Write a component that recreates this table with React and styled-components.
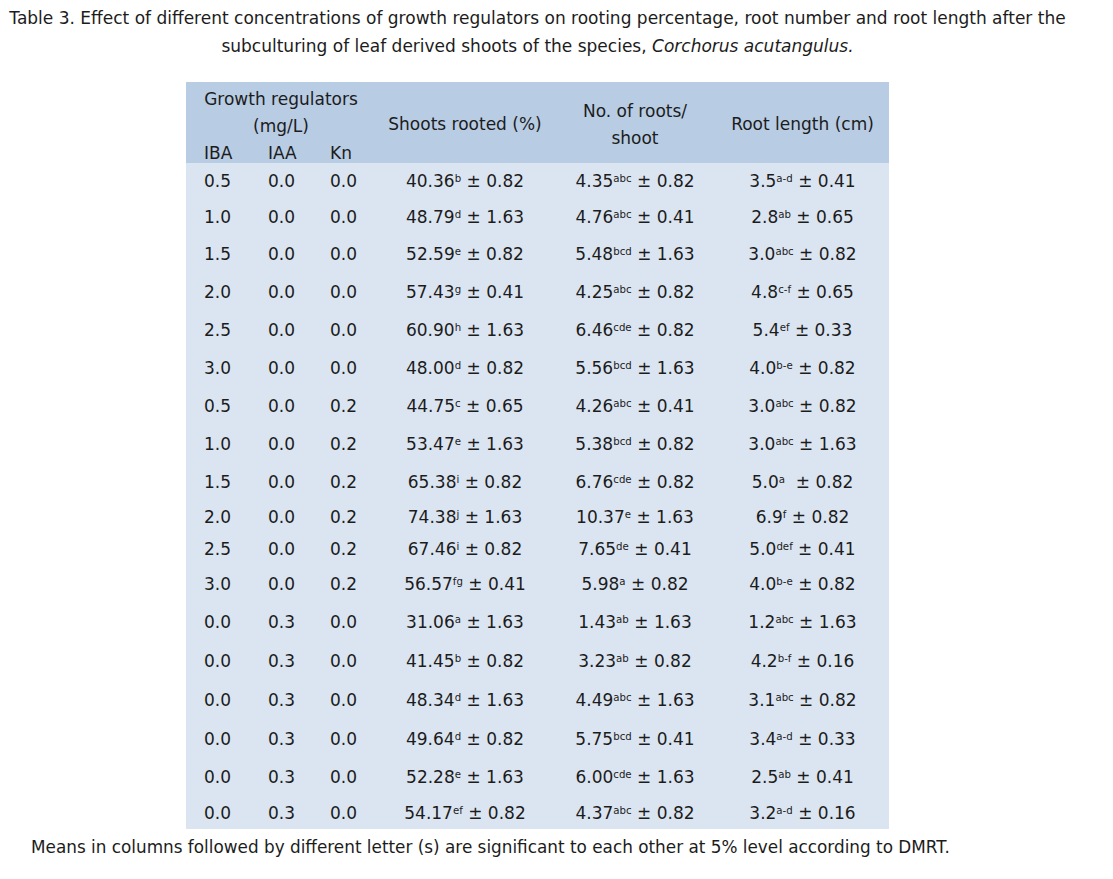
import React from "react";
import styled, { createGlobalStyle } from "styled-components";

const GlobalStyle = createGlobalStyle`
  body {
    margin: 0;
    background: #ffffff;
    font-family: "DejaVu Sans", "Open Sans", sans-serif;
    color: #1c1c1c;
  }
`;

const Page = styled.div`
  width: 1075px;
  display: flex;
  flex-direction: column;
  align-items: center;
  padding-top: 4px;
`;

const Caption = styled.div`
  display: flex;
  flex-direction: column;
  align-items: center;
  font-size: 17px;
  line-height: 28px;
  margin-bottom: 22px;
`;

const CaptionLine = styled.div`
  white-space: nowrap;
  em {
    font-style: italic;
  }
`;

const Table = styled.div`
  width: 703px;
  display: grid;
  grid-template-columns: 65px 62px 63px 178px 162px 173px;
  font-size: 17px;
`;

const Head = styled.div`
  grid-column: 1 / -1;
  display: grid;
  grid-template-columns: subgrid;
  grid-template-rows: 27px 27px 23px;
  padding-top: 4px;
  background: #b8cce4;
`;

const HeadCell = styled.div`
  display: flex;
  align-items: ${(p) => (p.$top ? "flex-start" : "center")};
  justify-content: ${(p) => (p.$left ? "flex-start" : "center")};
  padding-left: ${(p) => p.$pad || 0}px;
  grid-column: ${(p) => p.$col};
  grid-row: ${(p) => p.$row};
  text-align: center;
  line-height: 27px;
  white-space: nowrap;
`;

const Body = styled.div`
  grid-column: 1 / -1;
  display: grid;
  grid-template-columns: subgrid;
  background: #dbe5f1;
`;

const Row = styled.div`
  grid-column: 1 / -1;
  display: grid;
  grid-template-columns: subgrid;
  height: ${(p) => p.$h}px;
  align-items: center;
`;

const Conc = styled.div`
  padding-left: ${(p) => p.$pad}px;
  white-space: nowrap;
`;

const Value = styled.div`
  text-align: center;
  white-space: pre;
`;

const Sup = styled.span`
  font-size: 0.6em;
  vertical-align: 0.45em;
  line-height: 0;
`;

const Note = styled.div`
  align-self: flex-start;
  padding-left: 31px;
  margin-top: 6px;
  font-size: 16.85px;
  line-height: 24px;
  white-space: nowrap;
`;

const rows = [
  [36, "0.5", "0.0", "0.0", ["40.36", "b", "0.82"], ["4.35", "abc", "0.82"], ["3.5", "a-d", "0.41"]],
  [36, "1.0", "0.0", "0.0", ["48.79", "d", "1.63"], ["4.76", "abc", "0.41"], ["2.8", "ab", "0.65"]],
  [38, "1.5", "0.0", "0.0", ["52.59", "e", "0.82"], ["5.48", "bcd", "1.63"], ["3.0", "abc", "0.82"]],
  [38, "2.0", "0.0", "0.0", ["57.43", "g", "0.41"], ["4.25", "abc", "0.82"], ["4.8", "c-f", "0.65"]],
  [38, "2.5", "0.0", "0.0", ["60.90", "h", "1.63"], ["6.46", "cde", "0.82"], ["5.4", "ef", "0.33"]],
  [38, "3.0", "0.0", "0.0", ["48.00", "d", "0.82"], ["5.56", "bcd", "1.63"], ["4.0", "b-e", "0.82"]],
  [38, "0.5", "0.0", "0.2", ["44.75", "c", "0.65"], ["4.26", "abc", "0.41"], ["3.0", "abc", "0.82"]],
  [38, "1.0", "0.0", "0.2", ["53.47", "e", "1.63"], ["5.38", "bcd", "0.82"], ["3.0", "abc", "1.63"]],
  [37, "1.5", "0.0", "0.2", ["65.38", "i", "0.82"], ["6.76", "cde", "0.82"], ["5.0", "a", "0.82", true]],
  [33, "2.0", "0.0", "0.2", ["74.38", "j", "1.63"], ["10.37", "e", "1.63"], ["6.9", "f", "0.82"]],
  [32, "2.5", "0.0", "0.2", ["67.46", "i", "0.82"], ["7.65", "de", "0.41"], ["5.0", "def", "0.41"]],
  [37, "3.0", "0.0", "0.2", ["56.57", "fg", "0.41"], ["5.98", "a", "0.82"], ["4.0", "b-e", "0.82"]],
  [39, "0.0", "0.3", "0.0", ["31.06", "a", "1.63"], ["1.43", "ab", "1.63"], ["1.2", "abc", "1.63"]],
  [39, "0.0", "0.3", "0.0", ["41.45", "b", "0.82"], ["3.23", "ab", "0.82"], ["4.2", "b-f", "0.16"]],
  [39, "0.0", "0.3", "0.0", ["48.34", "d", "1.63"], ["4.49", "abc", "1.63"], ["3.1", "abc", "0.82"]],
  [39, "0.0", "0.3", "0.0", ["49.64", "d", "0.82"], ["5.75", "bcd", "0.41"], ["3.4", "a-d", "0.33"]],
  [38, "0.0", "0.3", "0.0", ["52.28", "e", "1.63"], ["6.00", "cde", "1.63"], ["2.5", "ab", "0.41"]],
  [33, "0.0", "0.3", "0.0", ["54.17", "ef", "0.82"], ["4.37", "abc", "0.82"], ["3.2", "a-d", "0.16"]],
];

function Stat({ v }) {
  return (
    <Value>
      {v[0]}
      <Sup>{v[1]}</Sup>
      {v[3] ? "  ± " : " ± "}
      {v[2]}
    </Value>
  );
}

export default function App() {
  return (
    <Page>
      <GlobalStyle />
      <Caption>
        <CaptionLine>
          Table 3. Effect of different concentrations of growth regulators on rooting percentage, root number and root length after the
        </CaptionLine>
        <CaptionLine>
          subculturing of leaf derived shoots of the species, <em>Corchorus acutangulus.</em>
        </CaptionLine>
      </Caption>

      <Table>
        <Head>
          <HeadCell $col="1 / 4" $row="1">Growth regulators</HeadCell>
          <HeadCell $col="1 / 4" $row="2">(mg/L)</HeadCell>
          <HeadCell $col="1" $row="3" $left $top $pad={18}>IBA</HeadCell>
          <HeadCell $col="2" $row="3" $left $top $pad={17}>IAA</HeadCell>
          <HeadCell $col="3" $row="3" $left $top $pad={17}>Kn</HeadCell>
          <HeadCell $col="4" $row="1 / 4">Shoots rooted (%)</HeadCell>
          <HeadCell $col="5" $row="1 / 4">
            No. of roots/
            <br />
            shoot
          </HeadCell>
          <HeadCell $col="6" $row="1 / 4">Root length (cm)</HeadCell>
        </Head>
        <Body>
          {rows.map((r, i) => (
            <Row key={i} $h={r[0]}>
              <Conc $pad={18}>{r[1]}</Conc>
              <Conc $pad={17}>{r[2]}</Conc>
              <Conc $pad={17}>{r[3]}</Conc>
              <Stat v={r[4]} />
              <Stat v={r[5]} />
              <Stat v={r[6]} />
            </Row>
          ))}
        </Body>
      </Table>

      <Note>
        Means in columns followed by different letter (s) are significant to each other at 5% level according to DMRT.
      </Note>
    </Page>
  );
}
